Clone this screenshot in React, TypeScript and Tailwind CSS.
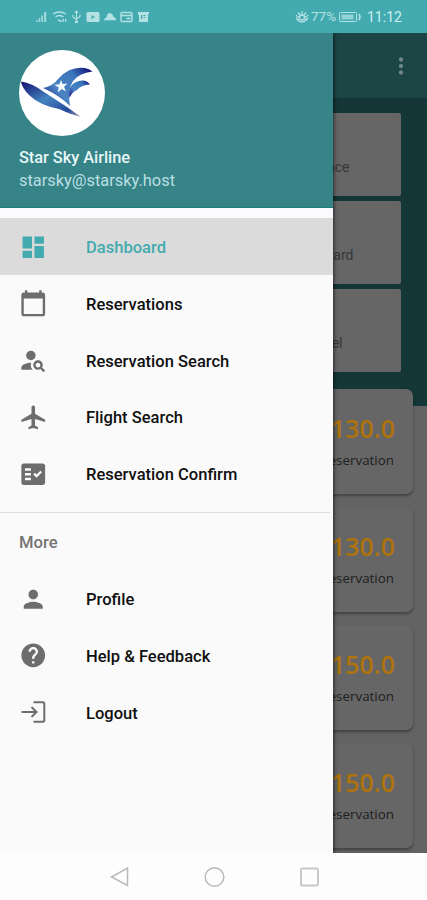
import type { ReactNode } from "react";
import {
    MdAirplanemodeActive,
    MdCalendarToday,
    MdDashboard,
    MdFactCheck,
    MdHelp,
    MdMoreVert,
    MdPerson,
} from "react-icons/md";

function PersonSearchIcon() {
    return (
        <svg viewBox="0 0 24 24" className="size-[28.5px]" fill="currentColor">
            <circle cx="10" cy="8" r="4" />
            <path d="M10.350 14.010C7.620 13.910 2 15.270 2 18v2h9.540c-2.470-2.760-1.230-5.890-1.190-5.990z" />
            <path d="M19.430 18.020c.36-.59.57-1.280.57-2.020 0-2.210-1.790-4-4-4s-4 1.790-4 4 1.790 4 4 4c.74 0 1.430-.22 2.020-.57L20.590 22 22 20.590l-2.570-2.570zM16 18c-1.100 0-2-.9-2-2s.9-2 2-2 2 .9 2 2-.9 2-2 2z" />
        </svg>
    );
}

function LogoutIcon() {
    return (
        <svg viewBox="0 0 28.5 28.5" className="size-[28.5px]" fill="none" stroke="currentColor">
            <path d="M2.5 14H17M12.5 9l5 5-5 5" strokeWidth="2" />
            <path d="M14.5 4.2h9.3q1.5 0 1.5 1.5v16.6q0 1.5-1.5 1.5h-9.3" strokeWidth="2" />
        </svg>
    );
}

const mainItems = [
    { label: "Dashboard", icon: <MdDashboard />, active: true },
    { label: "Reservations", icon: <MdCalendarToday /> },
    { label: "Reservation Search", icon: <PersonSearchIcon /> },
    { label: "Flight Search", icon: <MdAirplanemodeActive /> },
    { label: "Reservation Confirm", icon: <MdFactCheck /> },
];

const moreItems = [
    { label: "Profile", icon: <MdPerson /> },
    { label: "Help & Feedback", icon: <MdHelp /> },
    { label: "Logout", icon: <LogoutIcon /> },
];

const tiles = [
    { label: "Balance", width: "w-[78px]" },
    { label: "Credit Card", width: "w-[86px]" },
    { label: "Cancel", width: "w-[64px]" },
];
const totals = ["130.0", "130.0", "150.0", "150.0"];

function StatusBar() {
    return (
        <div className="flex h-[33px] shrink-0 items-center justify-between bg-[#43abb0] pl-[35px] pr-[25px] text-[#b4e2e4]">
            <svg viewBox="0 0 116 14" className="h-[14px] w-[116px]" fill="currentColor">
                {/* signal */}
                <path d="M1 10h1.500v2H1zM3.600 8h1.600v4H3.600zM6.200 5.500h1.700V12H6.200zM9 2h2.200v10H9z" opacity=".8" />
                {/* wifi */}
                <path d="M18 4q6-4 13 0M20.500 7q4-3 8 0M23 9.500l2.500 2 1-1" fill="none" stroke="currentColor" strokeWidth="1.300" />
                <path d="M27.500 9h1.300v3h-1.300zM30 9h1.300v3H30z" />
                {/* usb */}
                <path d="M41.500 2v10M38 5v2l3.500 2.500M45 4.500v2L41.500 9" fill="none" stroke="currentColor" strokeWidth="1.100" />
                <path d="m41.500 0 2 3h-4zM40 11h3v2h-3z" />
                {/* video */}
                <path fillRule="evenodd" d="M53 2h10q1.500 0 1.500 1.500v7q0 1.500-1.500 1.500H53q-1.500 0-1.500-1.500v-7Q51.500 2 53 2zm3.500 3v4l3.500-2z" />
                {/* cloud */}
                <path d="M69 10.300q0-2.300 2.300-2.600Q72 3 74.700 3t3.600 3.500q2.700.5 2.700 3.800z" />
                {/* card */}
                <path d="M87 2.500h9q1 0 1 1v7q0 1-1 1h-9q-1 0-1-1v-7q0-1 1-1zM86 5.500h11M91.500 8.500h4" fill="none" stroke="currentColor" strokeWidth="1.400" />
                {/* news */}
                <path fillRule="evenodd" d="M103 2h11v2h-1v8h-9V5h-1zm3 3v4h1.300V5zm2.500 0v1h2V5zm0 2v1h2V7z" />
            </svg>
            <div className="flex items-center text-[13.5px] leading-none">
                <svg viewBox="0 0 14 12" className="h-3 w-[14px]" fill="none" stroke="currentColor" strokeWidth="1.300">
                    <path d="M1 4q1 2 3 2M13 4q-1 2-3 2M3 1.500 5 4M11 1.500 9 4M7 0v4M1.500 8q5.500 6 11 0M1 7l3 2M13 7l-3 2" />
                    <circle cx="7" cy="6.500" r="2.500" />
                </svg>
                <span className="ml-[2px] w-[26px] whitespace-nowrap">77%</span>
                <svg viewBox="0 0 23 12" className="ml-[2px] h-3 w-[23px]" fill="none" stroke="currentColor">
                    <rect x=".600" y="1.500" width="17" height="9" rx="1" strokeWidth="1" />
                    <rect x="2.500" y="3.500" width="12" height="5" fill="currentColor" stroke="none" opacity=".700" />
                    <path d="M20 3q2 3 0 6" strokeWidth="1.500" />
                </svg>
                <span className="ml-[5px] w-[35px] whitespace-nowrap text-[14px] text-[#cdeff0]">11:12</span>
            </div>
        </div>
    );
}

function Logo() {
    return (
        <svg viewBox="0 0 86 86" className="size-[86px]">
            <defs>
                <linearGradient id="wing" x1="0" y1=".8" x2="1" y2=".1">
                    <stop offset="0" stopColor="#252a92" />
                    <stop offset=".3" stopColor="#4a84c2" />
                    <stop offset=".7" stopColor="#3b76bc" />
                    <stop offset="1" stopColor="#12107a" />
                </linearGradient>
                <linearGradient id="body" x1="0" y1="0" x2="1" y2="1">
                    <stop offset="0" stopColor="#12106f" />
                    <stop offset=".45" stopColor="#4384c0" />
                    <stop offset=".8" stopColor="#25499c" />
                    <stop offset="1" stopColor="#b5aeb0" />
                </linearGradient>
            </defs>
            <circle cx="43" cy="43" r="43" fill="#fff" />
            <path d="M24 38Q34 36 40 28Q51 16 66 18Q71 19 73.500 21.500Q60 23 54 31Q48 40 51 56Q40 45 24 38Z" fill="url(#wing)" />
            <path d="M50.500 48Q48 34 60 31Q67 29 71 34.500Q62 35 58 40Q53 42 50.500 48Z" fill="url(#wing)" />
            <path d="M2 31.500Q13 33 25 42L48 57L62 67Q50 64 40 59Q20 55 10 45Q3 38 2 31.500Z" fill="url(#body)" />
            <path d="m42 30 1.600 4 5-.4-3.600 3.200 2 4.700-4.300-2.400-4 3.300 1-5-4.300-2.600 5-.6z" fill="#f5fbff" />
        </svg>
    );
}

function DrawerItem({ label, icon, active }: { label: string; icon: ReactNode; active?: boolean }) {
    return (
        <a className={`flex h-[56.8px] items-center pl-[19px] ${active ? "bg-[#dbdbdb] text-[#43abb0]" : "text-[#101010]"}`}>
            <span className={`w-[67px] pt-px text-[28.5px] ${active ? "" : "text-[#6d6d6d]"}`}>{icon}</span>
            <span className="pt-[4px] text-[16.55px] font-medium">{label}</span>
        </a>
    );
}

function Drawer() {
    return (
        <aside className="absolute inset-y-0 left-0 w-[332.5px] bg-[#fafafa] shadow-[1px_0_4px_rgba(0,0,0,0.6)]">
            <div className="h-[175px] border-b border-[#208078] bg-[#368488] pl-[19px] pt-[17px]">
                <Logo />
                <div className="mt-[11px] text-[16.4px] font-medium leading-[22px] tracking-[-0.05px] text-[#e6f6f6]">Star Sky Airline</div>
                <div className="mt-px text-[16.4px] leading-[22px] text-[#b9dfe2]">starsky@starsky.host</div>
            </div>
            <nav>
                <div className="h-[10px] bg-[#fbfbff]" />
                {mainItems.map((item) => (
                    <DrawerItem key={item.label} {...item} />
                ))}
                <div className="mt-[10px] mr-[3px] h-px bg-[#dedede]" />
                <div className="flex h-[57px] items-center pl-[19px] pt-[4px] text-[16.6px] font-medium text-[#747474]">More</div>
                {moreItems.map((item) => (
                    <DrawerItem key={item.label} {...item} />
                ))}
            </nav>
        </aside>
    );
}

function DimmedPage() {
    return (
        <div className="h-full overflow-hidden bg-[#636363]">
            <div className="flex h-[66px] items-center justify-end border-b border-[#153637] bg-[#1c4546] pr-[13px] text-[#6f8586]">
                <MdMoreVert className="size-[26px]" />
            </div>
            <div className="h-[307px] bg-[#153637] pl-[220px] pr-[26px] pt-[14px]">
                <div className="flex flex-col gap-[5px]">
                    {tiles.map(({ label, width }) => (
                        <div key={label} className="flex h-[83px] justify-center rounded-[2px] bg-[#666] pt-[44px] text-[14px] leading-5 text-[#363636]">
                            <span className={`${width} whitespace-nowrap text-right`}>{label}</span>
                        </div>
                    ))}
                </div>
            </div>
            <div className="-mt-[17px] flex flex-col gap-[13px] px-[14px]">
                {totals.map((total, i) => (
                    <div key={i} className="flex h-[105px] flex-col items-end rounded-[7px] bg-[#666] pr-[18px] pt-[21px] shadow-[0_2px_3px_rgba(0,0,0,0.35)]">
                        <div className="font-['Open_Sans'] text-[25px] font-semibold leading-[37px] text-[#ae730c]">{total}</div>
                        <div className="pr-px pt-px font-['Open_Sans'] text-[13.4px] leading-6 text-[#202020]">Reservation</div>
                    </div>
                ))}
            </div>
        </div>
    );
}

function NavigationBar() {
    return (
        <div className="flex h-[47px] shrink-0 justify-center bg-[#fdfdfd] pt-[12px]">
            <svg viewBox="0 0 210 24" className="h-6 w-[210px]" fill="none" stroke="#b9b9b9" strokeWidth="1.500">
                <path d="M18.500 3v17.500L2.500 12z" />
                <circle cx="105.500" cy="12" r="9.300" />
                <rect x="192" y="3.500" width="17" height="17" rx="1.500" stroke="#c8c8c8" strokeWidth="2" />
            </svg>
        </div>
    );
}

export default function App() {
    return (
        <div className="flex h-[900px] w-[427px] flex-col overflow-hidden bg-[#fdfdfd] font-['Roboto',sans-serif]">
            <StatusBar />
            <main className="relative min-h-0 flex-1 overflow-hidden">
                <DimmedPage />
                <Drawer />
            </main>
            <NavigationBar />
        </div>
    );
}
